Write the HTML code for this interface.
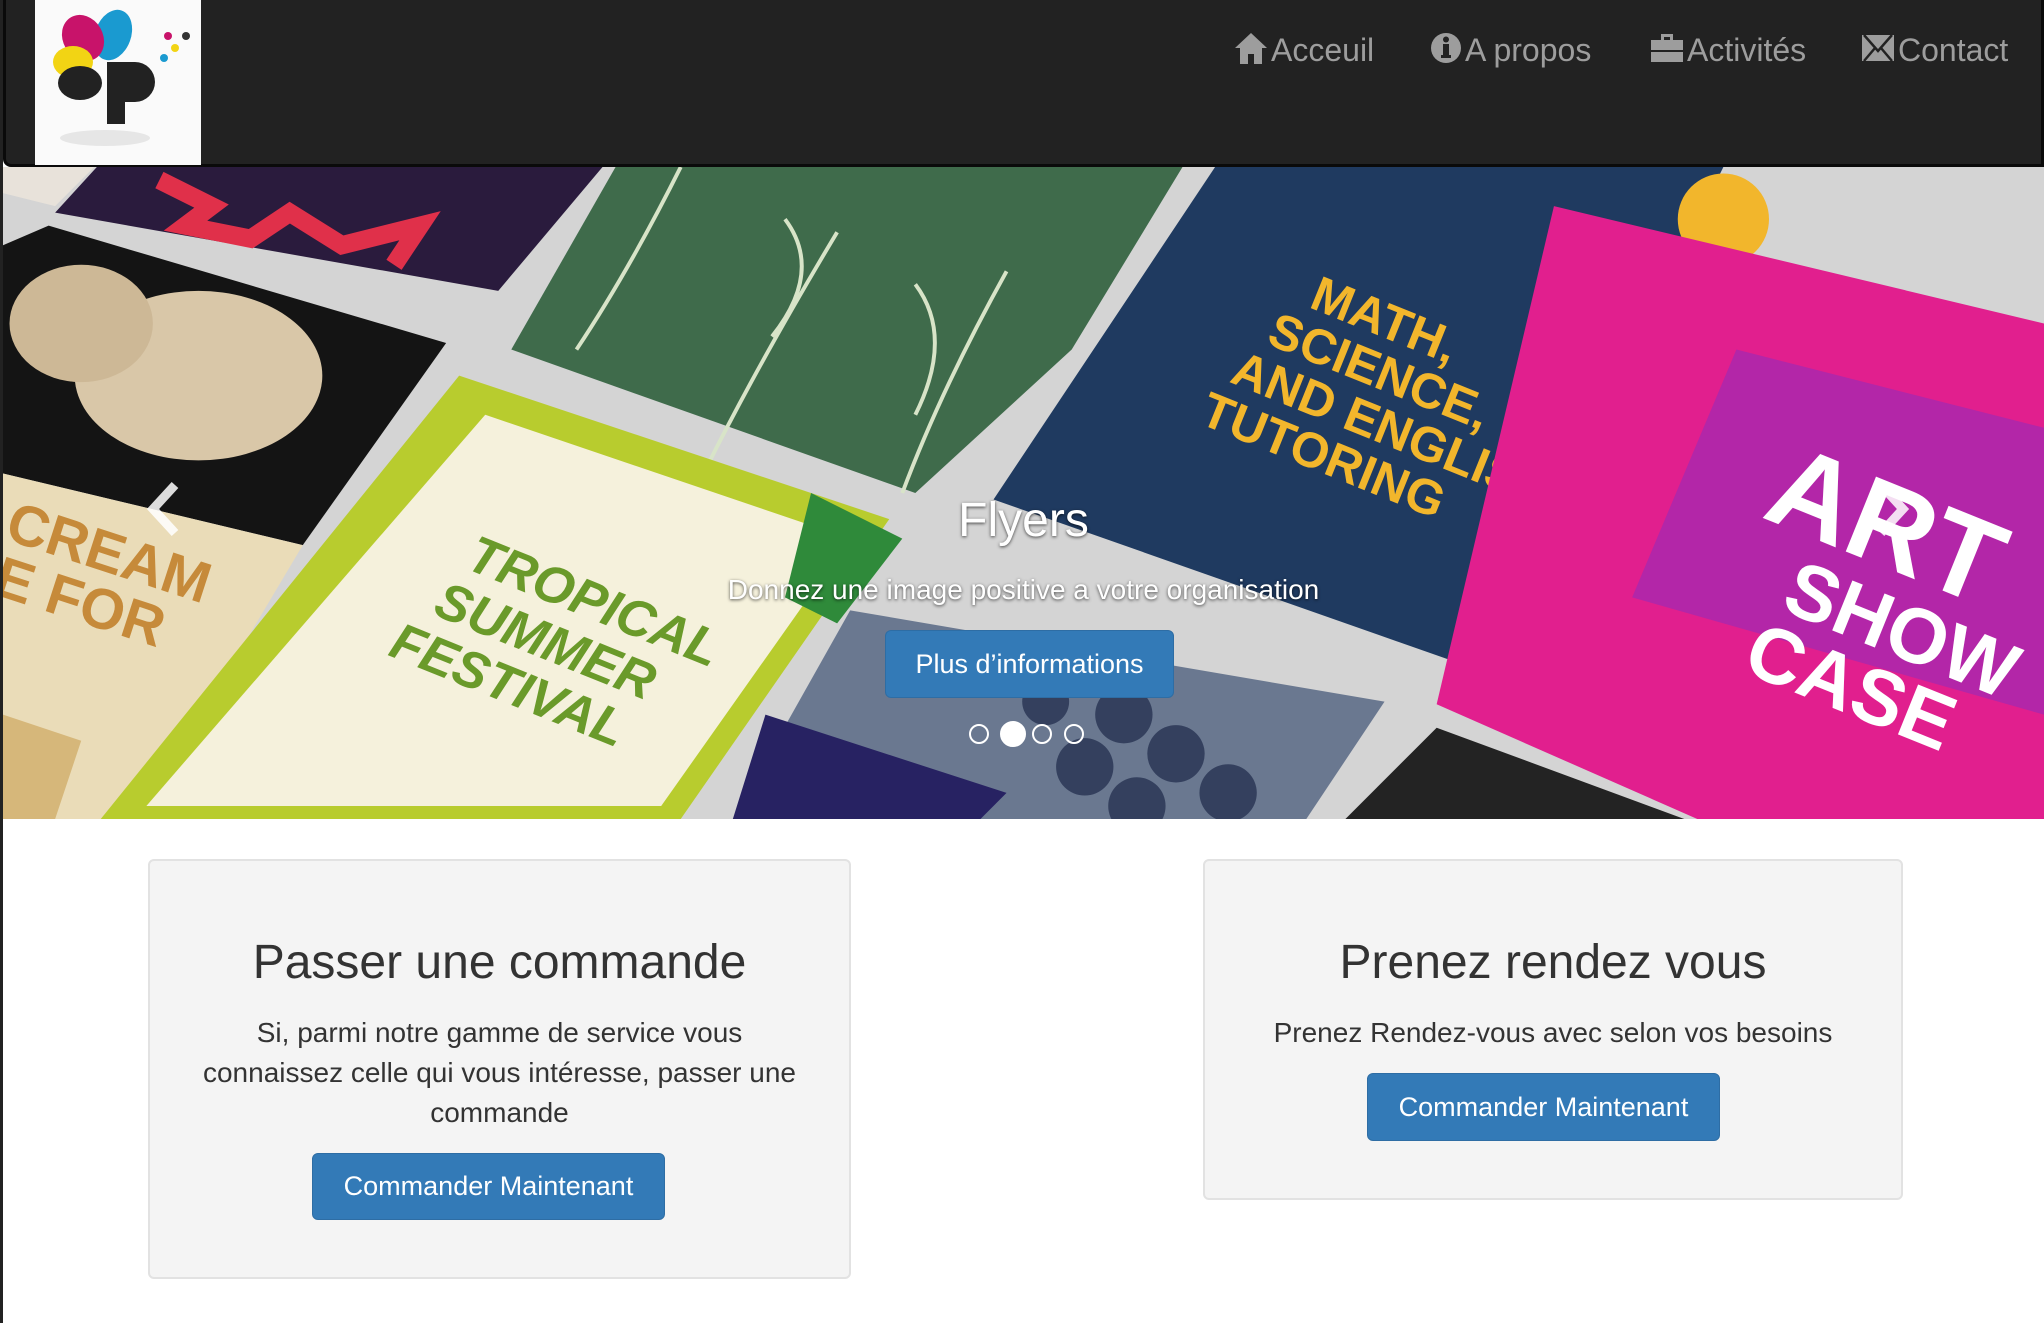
<!DOCTYPE html>
<html><head><meta charset="utf-8"><style>
*{margin:0;padding:0;box-sizing:border-box}
html,body{width:2044px;height:1323px;overflow:hidden;background:#fff;font-family:"Liberation Sans",Arial,sans-serif}
.nav{position:absolute;left:3px;top:0;width:2041px;height:167px;background:#222;border:3px solid #0a0a0a;border-top:none;border-radius:0 0 0 8px}
.logo{position:absolute;left:35px;top:0;width:166px;height:165px;background:#fafafa}
.nl{position:absolute;top:32px;color:#9d9d9d;font-size:32px;white-space:nowrap}
.nl svg{vertical-align:-3px;margin-right:3px}
.car{position:absolute;left:3px;top:167px;width:2041px;height:652px;overflow:hidden;background:#d9d9d9}
.cap{position:absolute;left:0;width:2041px;text-align:center;color:#fff;text-shadow:0 1px 3px rgba(0,0,0,.7)}
.btn{position:absolute;background:#337ab7;border:1px solid #2e6da4;border-radius:6px;color:#fff;font-size:27px;text-align:center}
.dot{position:absolute;top:724px;width:20px;height:20px;border:2px solid #fff;border-radius:50%}
.panel{position:absolute;background:#f4f4f4;border:2px solid #e2e2e2;border-radius:6px;text-align:center;color:#333}
.panel h2{font-weight:normal;font-size:48px;position:absolute;left:0;right:0}
.panel p{font-size:28px;line-height:40px;position:absolute;left:0;right:0}
.left-line{position:absolute;left:0;top:0;width:3px;height:1323px;background:#222}
</style></head><body>
<div class="left-line"></div>
<div class="car">
<svg width="2041" height="652" viewBox="0 0 1566 500" preserveAspectRatio="none" style="position:absolute;left:0;top:0">
<rect width="1566" height="500" fill="#d4d4d4"/>
<polygon points="0,0 70,0 40,30 0,20" fill="#e8e2da"/>
<polygon points="72,0 460,0 380,95 40,35" fill="#2a1b3d"/>
<path d="M120,10 l40,20 l-20,15 l50,10 l30,-20 l40,25 l60,-15 l-20,30" stroke="#e0304a" stroke-width="14" fill="none"/>
<polygon points="0,60 35,45 340,135 230,290 0,235" fill="#141414"/>
<ellipse cx="150" cy="160" rx="95" ry="65" fill="#d9c7a8"/>
<ellipse cx="60" cy="120" rx="55" ry="45" fill="#cdb896"/>
<polygon points="0,235 230,290 105,500 0,500" fill="#eadcb8"/>
<polygon points="0,420 60,440 40,500 0,500" fill="#d6b77a"/>
<text x="0" y="285" transform="rotate(18 0 285)" font-size="44" font-weight="bold" fill="#c68a3a" font-family="Liberation Sans">CREAM</text>
<text x="-10" y="330" transform="rotate(18 0 330)" font-size="44" font-weight="bold" fill="#c68a3a" font-family="Liberation Sans">E FOR</text>
<polygon points="470,0 905,0 820,140 700,250 390,140" fill="#3f6b4b"/>
<g stroke="#d8e4c8" stroke-width="3" fill="none"><path d="M520,0 q-40,80 -80,140"/><path d="M640,50 q-60,100 -100,180"/><path d="M770,80 q-50,90 -80,170"/><path d="M600,40 q30,40 -10,90"/><path d="M700,90 q30,40 0,100"/></g>
<polygon points="930,0 1320,0 1130,385 760,255" fill="#1f3a60"/>
<g transform="rotate(22 1000 150)" font-family="Liberation Sans" font-weight="bold" fill="#f2b62c"><text x="985" y="110" font-size="38">MATH,</text><text x="965" y="148" font-size="38">SCIENCE,</text><text x="950" y="186" font-size="38">AND ENGLISH</text><text x="940" y="224" font-size="38">TUTORING</text></g>
<circle cx="1320" cy="40" r="35" fill="#f2b62c"/>
<polygon points="1190,30 1566,120 1566,500 1300,500 1100,412" fill="#e11f8e"/>
<polygon points="1330,140 1566,200 1566,420 1250,330" fill="#b326a8"/>
<g transform="rotate(22 1400 300)" font-family="Liberation Sans" font-weight="bold" fill="#fff"><text x="1340" y="290" font-size="90">ART</text><text x="1380" y="350" font-size="60">SHOW</text><text x="1370" y="405" font-size="60">CASE</text></g>
<polygon points="350,160 680,270 520,500 75,500" fill="#b8cc2e"/>
<polygon points="370,190 650,285 505,490 110,490" fill="#f5f1dc"/>
<g transform="rotate(22 400 380)" font-family="Liberation Sans" font-weight="bold" font-style="italic" fill="#6a9a2a"><text x="330" y="330" font-size="40">TROPICAL</text><text x="320" y="372" font-size="40">SUMMER</text><text x="300" y="414" font-size="40">FESTIVAL</text></g>
<polygon points="620,250 690,285 640,350 600,330" fill="#2f8a3a"/>
<polygon points="650,340 1060,410 1000,500 560,500" fill="#6a7890"/>
<g fill="#34405e"><circle cx="860" cy="420" r="22"/><circle cx="900" cy="450" r="22"/><circle cx="830" cy="460" r="22"/><circle cx="940" cy="480" r="22"/><circle cx="870" cy="490" r="22"/><circle cx="800" cy="410" r="18"/></g>
<polygon points="585,420 770,480 750,500 560,500" fill="#272262"/>
<polygon points="1030,500 1100,430 1290,500" fill="#232323"/>
</svg>
<svg style="position:absolute;left:140px;top:312px" width="40" height="60" viewBox="0 0 40 60"><path d="M32,6 L10,30 L32,54" stroke="#fff" stroke-width="9" fill="none" opacity=".85"/></svg>
<svg style="position:absolute;left:1870px;top:312px" width="40" height="60" viewBox="0 0 40 60"><path d="M8,6 L30,30 L8,54" stroke="#fff" stroke-width="9" fill="none" opacity=".85"/></svg>
<div class="cap" style="top:326px;font-size:48px">Flyers</div>
<div class="cap" style="top:407px;font-size:28px">Donnez une image positive a votre organisation</div>
<div class="btn" style="left:882px;top:463px;width:289px;height:68px;line-height:66px">Plus d’informations</div>
<div class="dot" style="left:966px;top:557px"></div>
<div class="dot" style="left:997px;top:554px;width:26px;height:26px;background:#fff"></div>
<div class="dot" style="left:1029px;top:557px"></div>
<div class="dot" style="left:1061px;top:557px"></div>
</div>
<div class="nav"></div>
<div class="logo"><svg width="166" height="165" viewBox="0 0 166 165">
<ellipse cx="78" cy="35" rx="18" ry="26" fill="#1a9ad0" transform="rotate(20 78 35)"/>
<ellipse cx="48" cy="38" rx="20" ry="24" fill="#c8136a" transform="rotate(-30 48 38)"/>
<ellipse cx="38" cy="62" rx="20" ry="16" fill="#f2d414"/>
<ellipse cx="45" cy="83" rx="22" ry="17" fill="#222"/>
<rect x="72" y="62" width="18" height="62" fill="#222"/><path d="M88,62 h12 a20,20 0 0 1 0,40 h-12z" fill="#222"/>
<circle cx="133" cy="36" r="4" fill="#c8136a"/><circle cx="140" cy="48" r="4" fill="#f2d414"/><circle cx="129" cy="58" r="4" fill="#1a9ad0"/><circle cx="151" cy="36" r="4" fill="#333"/>
<ellipse cx="70" cy="138" rx="45" ry="8" fill="#e6e6e6"/></svg></div>
<div class="nl" style="left:1234px"><svg width="34" height="32" viewBox="0 0 34 32"><path d="M17,1 L33,16 H28 V32 H20 V22 H14 V32 H6 V16 H1Z" fill="#9d9d9d"/></svg>Acceuil</div>
<div class="nl" style="left:1430px"><svg width="32" height="32" viewBox="0 0 32 32"><circle cx="16" cy="16" r="15" fill="#9d9d9d"/><rect x="13" y="12" width="6" height="13" fill="#222"/><rect x="11" y="23" width="10" height="3" fill="#222"/><circle cx="16" cy="7.5" r="3" fill="#222"/></svg>A propos</div>
<div class="nl" style="left:1650px"><svg width="34" height="32" viewBox="0 0 34 32"><path d="M11,2 h12 v6 h-3 v-3 h-6 v3 h-3z M1,8 h32 v10 h-32z M1,20 h32 v10 h-32z" fill="#9d9d9d"/></svg>Activités</div>
<div class="nl" style="left:1861px"><svg width="34" height="32" viewBox="0 0 34 32"><path d="M1,3 h32 v26 h-32z" fill="#9d9d9d"/><path d="M3,3 L17,19 L31,3 M3,29 L14,16 M31,29 L20,16" stroke="#222" stroke-width="2.5" fill="none"/></svg>Contact</div>
<div class="panel" style="left:148px;top:859px;width:703px;height:420px">
<h2 style="top:74px">Passer une commande</h2>
<p style="top:152px;padding:0 45px">Si, parmi notre gamme de service vous connaissez celle qui vous intéresse, passer une commande</p>
<div class="btn" style="left:162px;top:292px;width:353px;height:67px;line-height:65px">Commander Maintenant</div>
</div>
<div class="panel" style="left:1203px;top:859px;width:700px;height:341px">
<h2 style="top:74px">Prenez rendez vous</h2>
<p style="top:152px">Prenez Rendez-vous avec selon vos besoins</p>
<div class="btn" style="left:162px;top:212px;width:353px;height:68px;line-height:66px">Commander Maintenant</div>
</div>
</body></html>
